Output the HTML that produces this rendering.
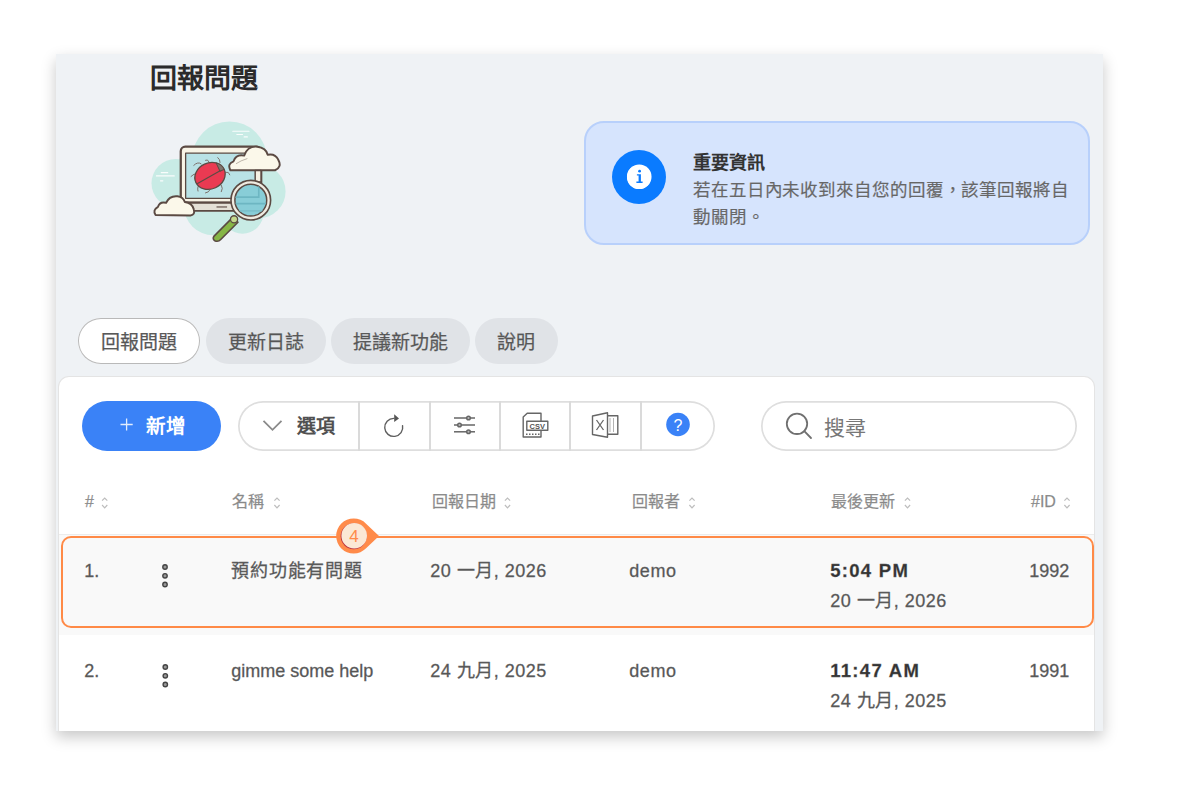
<!DOCTYPE html>
<html lang="zh-TW"><head><meta charset="utf-8">
<style>
html,body{margin:0;padding:0;background:#fff;width:1200px;height:800px;overflow:hidden}
body{font-family:"Liberation Sans",sans-serif;color:#555;position:relative}
.a{position:absolute}
#card{left:56px;top:54px;width:1047px;height:677px;background:#eff2f5;box-shadow:0 6px 14px rgba(0,0,0,.22);overflow:hidden}
#title{left:93.5px;top:6.5px;font-size:27px;font-weight:bold;color:#2b2b2b;line-height:36px;white-space:nowrap}
#info{left:528px;top:67px;width:502px;height:120px;background:#d6e4fd;border:2px solid #b8d0fb;border-radius:20px}
#infoic{left:556px;top:96px;width:54px;height:54px;border-radius:50%;background:#0a7bff}
#infoin{left:15px;top:15px;width:24px;height:24px;border-radius:50%;background:#fff}
#infot{-webkit-text-stroke:.2px #777;left:637px;top:96px;font-size:17.5px;line-height:27px;color:#666;white-space:nowrap;letter-spacing:.9px}
#infot b{color:#333;font-size:18px;letter-spacing:0;-webkit-text-stroke:0}
.tab{-webkit-text-stroke:.25px #666;top:264px;height:46px;line-height:50px;border-radius:23px;background:#e0e3e7;font-size:19px;color:#555;text-align:center;white-space:nowrap}
.tab.on{background:#fff;box-shadow:inset 0 0 0 1px #b9b9b9}
#panel{left:3px;top:323px;width:1035px;height:400px;background:#fff;border-radius:10px;box-shadow:0 0 0 1px #e4e4e4}
#newb{left:22.7px;top:23.5px;width:139px;height:50px;border-radius:25px;background:#3a82f7;color:#fff;font-size:18px;line-height:50px;white-space:nowrap}
#grp{left:178.9px;top:23.8px;width:477px;height:50px;border-radius:25px;box-shadow:inset 0 0 0 1.7px #dedede}
.dv{top:0;width:2px;height:50px;background:#dadada}
#srch{left:702.2px;top:24px;width:315.5px;height:49.5px;border-radius:25px;box-shadow:inset 0 0 0 1.7px #dedede}
.th{-webkit-text-stroke:.25px #999;top:115px;font-size:16px;color:#888;white-space:nowrap;line-height:20px}
.td{-webkit-text-stroke:.3px #666;margin-left:-0.8px;font-size:18px;color:#555;white-space:nowrap;line-height:20px}
.ls{letter-spacing:.5px}
.sort{display:inline-block;vertical-align:middle}
#row1{left:0;top:157px;width:1035px;height:100px;background:#f9f9f9;border-top:1px solid #ececec}
#hl{left:1.8px;top:159px;width:1033.4px;height:92.4px;border:2px solid #ff8a47;border-radius:10px;box-sizing:border-box}
</style></head><body>
<div id="card" class="a">
  <div id="title" class="a">回報問題</div>
  <svg class="a" style="left:89px;top:61px" width="150" height="130" viewBox="0 0 923 800">
<defs><clipPath id="lens"><circle cx="651" cy="524" r="96"/></clipPath></defs>
<g fill="#c8ebe5">
<circle cx="520" cy="270" r="230"/><circle cx="190" cy="420" r="150"/><circle cx="420" cy="560" r="180"/>
<circle cx="700" cy="470" r="165"/><circle cx="600" cy="600" r="130"/><circle cx="330" cy="380" r="160"/>
</g>
<g stroke="#fff" stroke-width="7" stroke-linecap="round" opacity=".9">
<line x1="540" y1="100" x2="640" y2="100"/><line x1="565" y1="120" x2="600" y2="120"/><line x1="610" y1="135" x2="630" y2="135"/>
<line x1="70" y1="375" x2="180" y2="375"/><line x1="100" y1="355" x2="140" y2="355"/><line x1="95" y1="405" x2="110" y2="405"/>
</g>
<g stroke="#5b4a43" stroke-linejoin="round">
<rect x="220" y="195" width="495" height="345" rx="28" fill="#f8f4e6" stroke-width="14"/>
<rect x="250" y="235" width="440" height="278" fill="#b9e2e6" stroke-width="8"/>
<path d="M195 540 H690 V560 Q690 590 660 590 H225 Q195 590 195 560 Z" fill="#e4e0d6" stroke-width="12"/>
<line x1="440" y1="566" x2="505" y2="566" stroke-width="7"/>
<g fill="none" stroke="#7a6e69" stroke-width="6" stroke-linecap="round">
<path d="M345 300 Q325 285 300 310"/><path d="M322 362 Q300 358 283 378"/><path d="M338 425 Q318 440 326 468"/>
<path d="M462 292 Q462 272 448 262"/><path d="M498 352 Q515 345 522 368"/><path d="M470 432 Q482 452 470 472"/>
<path d="M395 290 Q385 268 372 278"/><path d="M402 458 Q392 478 372 480"/>
</g>
<g transform="rotate(-25 400 375)">
<ellipse cx="400" cy="375" rx="96" ry="80" fill="#ea3a52" stroke-width="8"/>
<path d="M468 318 A96 80 0 0 1 496 375 L468 375 Z" fill="#80756f" stroke-width="6"/>
<line x1="308" y1="385" x2="470" y2="372" stroke-width="7"/>
</g>
<path d="M525 340 Q505 300 545 285 Q560 240 610 250 Q630 190 690 195 Q745 200 755 245 Q800 235 820 275 Q845 320 800 340 Z" fill="#fbf8ea" stroke-width="12"/>
<path d="M560 300 Q590 280 630 268" fill="none" stroke-width="4" opacity=".6"/>
<path d="M65 615 Q45 585 80 565 Q90 530 130 540 Q150 495 200 500 Q235 505 245 535 Q290 540 300 580 Q310 615 280 618 Z" fill="#fbf8ea" stroke-width="12"/>
<rect x="678" y="342" width="36" height="70" fill="#f6f1e4" stroke-width="9"/>
<path d="M535 635 L425 745 Q412 765 432 775 Q452 782 466 766 L572 660 Z" fill="#86b545" stroke-width="10"/>
<circle cx="548" cy="642" r="22" fill="#c4d98e" stroke-width="8"/>
<circle cx="651" cy="524" r="122" fill="#efebe1" stroke-width="10"/>
<circle cx="651" cy="524" r="98" fill="#88cdd7" stroke-width="9"/>
</g>
<g clip-path="url(#lens)" fill="none" stroke="#6db6c2" stroke-width="10">
<path d="M540 505 H700 V420"/><path d="M540 545 H760"/><path d="M540 590 H760" stroke="#7cc0cb"/>
</g>
</svg>
  <div id="info" class="a"></div>
  <div id="infoic" class="a"><div id="infoin" class="a"></div></div>
  <div id="infot" class="a"><b>重要資訊</b><br>若在五日內未收到來自您的回覆，該筆回報將自<br>動關閉。</div>
  <div class="a tab on" style="left:22px;width:122px">回報問題</div>
  <div class="a tab" style="left:149.5px;width:120.5px">更新日誌</div>
  <div class="a tab" style="left:275px;width:138.5px">提議新功能</div>
  <div class="a tab" style="left:418.5px;width:83px">說明</div>
  <div id="panel" class="a">
    <div id="newb" class="a"><b class="a" style="left:64.5px;top:0.5px;font-size:19.5px">新增</b></div>
    <div id="grp" class="a">
      <div class="a dv" style="left:119.8px"></div>
      <div class="a dv" style="left:190.8px"></div>
      <div class="a dv" style="left:260.9px"></div>
      <div class="a dv" style="left:331.1px"></div>
      <div class="a dv" style="left:402.2px"></div>
      <b class="a" style="left:59.5px;top:15px;font-size:19px;line-height:22px;color:#505050">選項</b>
    </div>
    <div id="srch" class="a"><span class="a" style="left:63px;top:15px;font-size:21px;color:#777;line-height:24px">搜尋</span></div>
    <div class="a th" style="left:26px">#</div>
    <div class="a th" style="left:173px">名稱</div>
    <div class="a th" style="left:373px">回報日期</div>
    <div class="a th" style="left:573px">回報者</div>
    <div class="a th" style="left:772px">最後更新</div>
    <div class="a th" style="left:972px">#ID</div>
    <div id="row1" class="a"></div>
    <div id="hl" class="a"></div>
    <div class="a td" style="left:26px;top:184px">1.</div>
    <div class="a td" style="left:173px;top:184px"><span style="letter-spacing:.8px">預約功能有問題</span></div>
    <div class="a td" style="left:372px;top:184px" ><span class="ls">20 一月, 2026</span></div>
    <div class="a td" style="left:571px;top:184px;letter-spacing:.6px">demo</div>
    <div class="a td" style="left:772px;top:184px;font-weight:bold;color:#333;font-size:18.5px;letter-spacing:1.3px">5:04 PM</div>
    <div class="a td" style="left:772px;top:214px" ><span class="ls">20 一月, 2026</span></div>
    <div class="a td" style="left:971px;top:184px">1992</div>
    <div class="a td" style="left:26px;top:284px">2.</div>
    <div class="a td" style="left:173px;top:284px">gimme some help</div>
    <div class="a td" style="left:372px;top:284px" ><span class="ls">24 九月, 2025</span></div>
    <div class="a td" style="left:571px;top:284px;letter-spacing:.6px">demo</div>
    <div class="a td" style="left:772px;top:284px;font-weight:bold;color:#333;font-size:18.5px;letter-spacing:1.3px">11:47 AM</div>
    <div class="a td" style="left:772px;top:314px" ><span class="ls">24 九月, 2025</span></div>
    <div class="a td" style="left:971px;top:284px">1991</div>
  </div>
</div>
<svg class="a" style="left:0;top:0" width="1200" height="800" viewBox="0 0 1200 800">
<path d="M120.5 424.5 H132.7 M126.6 418.4 V430.6" stroke="#fff" stroke-width="1.3" opacity=".85"/>
<polyline points="263.5,420.8 272.5,429.8 281.5,420.8" fill="none" stroke="#8a8a8a" stroke-width="1.8"/>
<path d="M393.7 418.4 A9 9 0 1 0 402.56 425.64" fill="none" stroke="#5f5f5f" stroke-width="1.4" stroke-linecap="round"/>
<path d="M394.2 414.2 L399 418.4 L394.2 422 Z" fill="#555"/>
<g stroke="#666" stroke-width="1.5">
<line x1="454" y1="418" x2="475" y2="418"/><line x1="454" y1="425" x2="475" y2="425"/><line x1="454" y1="431.8" x2="475" y2="431.8"/>
<circle cx="468.5" cy="418" r="1.8" fill="#bbb"/><circle cx="459.5" cy="425" r="1.8" fill="#bbb"/><circle cx="468.5" cy="431.8" r="1.8" fill="#bbb"/>
</g>
<g fill="#fff" stroke="#666" stroke-width="1.4" stroke-linejoin="round">
<path d="M523.2 417 L527.2 413.2 H541 V437 H523.2 Z"/>
<rect x="526.8" y="421.3" width="21" height="9" fill="#fff"/>
<text x="537.3" y="428.8" font-size="7.5" font-weight="bold" text-anchor="middle" fill="#555" stroke="none" font-family="Liberation Sans">CSV</text>
<path d="M526 434.3 H540" stroke-dasharray="1.5 1.5"/>
</g>
<g fill="#fff" stroke="#666" stroke-width="1.4" stroke-linejoin="round">
<rect x="606" y="415.8" width="11.8" height="18.5"/>
<path d="M592.5 416 L607.5 412.8 V437.3 L592.5 434.5 Z"/>
<path d="M610 418.5 V432 M613.5 418.5 V432" stroke-width="1" stroke-dasharray="1 1"/>
<path d="M596.5 420 L603.5 430 M603.5 420 L596.5 430" stroke-width="1.3"/>
</g>
<circle cx="678" cy="424.5" r="11.8" fill="#3a82f7"/>
<text x="678" y="430.5" font-size="16" text-anchor="middle" fill="#fff" font-family="Liberation Sans">?</text>
<g fill="none" stroke="#707070" stroke-width="1.8" stroke-linecap="round">
<circle cx="797" cy="423.8" r="10.2"/><line x1="804.3" y1="431.2" x2="811" y2="438"/>
</g>
<g fill="none" stroke="#bdbdbd" stroke-width="1.2"><path d="M102.10000000000001 500.6 L104.7 498 L107.3 500.6 M102.10000000000001 505 L104.7 507.8 L107.3 505"/><path d="M274.4 500.6 L277 498 L279.6 500.6 M274.4 505 L277 507.8 L279.6 505"/><path d="M504.9 500.6 L507.5 498 L510.1 500.6 M504.9 505 L507.5 507.8 L510.1 505"/><path d="M689.4 500.6 L692 498 L694.6 500.6 M689.4 505 L692 507.8 L694.6 505"/><path d="M904.9 500.6 L907.5 498 L910.1 500.6 M904.9 505 L907.5 507.8 L910.1 505"/><path d="M1064.4 500.6 L1067 498 L1069.6 500.6 M1064.4 505 L1067 507.8 L1069.6 505"/></g>
<g fill="#999" stroke="#444" stroke-width="1.4">
<circle cx="165" cy="567" r="2.2"/><circle cx="165" cy="575.8" r="2.2"/><circle cx="165" cy="584.5" r="2.2"/>
<circle cx="165.3" cy="667" r="2.2"/><circle cx="165.3" cy="675.8" r="2.2"/><circle cx="165.3" cy="684.5" r="2.2"/>
</g>
<circle cx="639.25" cy="176.75" r="12.3" fill="#fff"/>
<g fill="#0a7bff"><circle cx="639.6" cy="171.2" r="1.4"/><path d="M636.9 174.2 H640.9 V181.6 H642.6 V183 H636.4 V181.6 H638.6 V175.5 H636.9 Z"/></g>
<path d="M379 536 L366.07 548.37 A17.5 17.5 0 1 1 366.07 523.63 Z" fill="#ff8b4a"/>
<circle cx="353.7" cy="536.3" r="13" fill="#b8303f"/>
<circle cx="354.2" cy="535.8" r="12.8" fill="#fbe8d5"/>
<text x="354" y="541.8" font-size="17" text-anchor="middle" fill="#ff8b4a" font-family="Liberation Sans">4</text>
</svg>
</body></html>
